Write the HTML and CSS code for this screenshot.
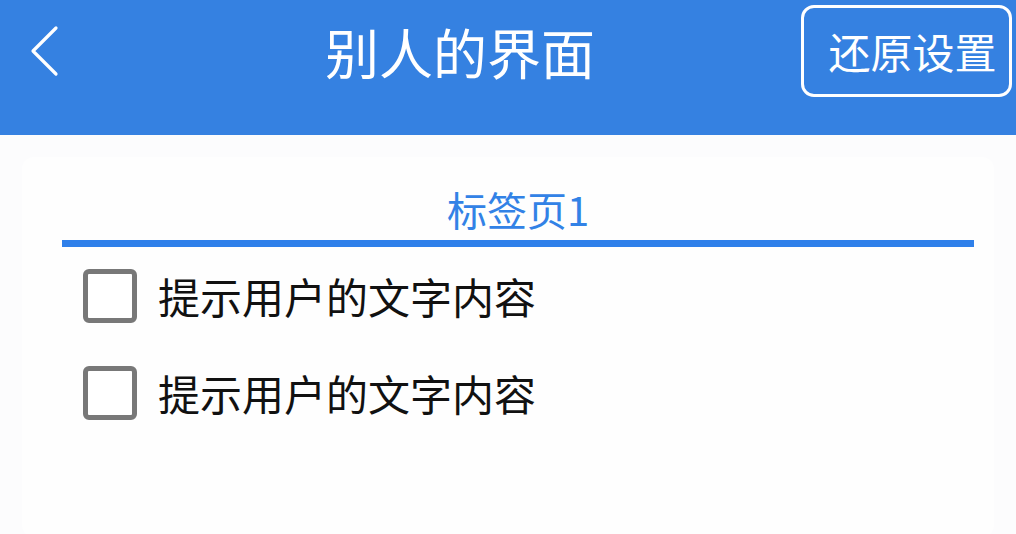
FILE: index.html
```html
<!DOCTYPE html>
<html lang="zh">
<head>
<meta charset="utf-8">
<title>别人的界面</title>
<link rel="stylesheet" href="styles.css">
</head>
<body>
<header class="topbar">
  <div class="back">
    <svg width="32" height="52" viewBox="0 0 32 52"><path d="M28 3 L5 26 L28 49" fill="none" stroke="#fff" stroke-width="3.2" stroke-linecap="round" stroke-linejoin="round"/></svg>
  </div>
  <h1 class="title">别人的界面</h1>
  <button class="reset">还原设置</button>
</header>
<main class="content">
  <section class="card">
    <div class="tabs">
      <div class="tab">标签页1</div>
    </div>
    <ul class="options">
      <li class="option"><span class="box"></span><span class="label">提示用户的文字内容</span></li>
      <li class="option"><span class="box"></span><span class="label">提示用户的文字内容</span></li>
    </ul>
  </section>
</main>
</body>
</html>
```
FILE: styles.css
```css
* { box-sizing: border-box; }
html, body { margin: 0; padding: 0; }
body {
  width: 1016px;
  height: 534px;
  overflow: hidden;
  background: #fcfcfd;
  font-family: "Noto Sans CJK SC", "Noto Sans", sans-serif;
}
.topbar {
  height: 135px;
  background: #3581e1;
  display: flex;
  align-items: flex-start;
  padding: 5px 4px 0 0;
}
.back {
  width: 119px;
  height: 92px;
  display: flex;
  align-items: center;
  padding-left: 28px;
}
.back svg { display: block; }
.title {
  flex: 1;
  margin: 0;
  height: 92px;
  display: flex;
  align-items: center;
  justify-content: center;
  color: #fff;
  font-size: 54px;
  font-weight: 400;
}
.reset {
  width: 211px;
  height: 92px;
  border: 3px solid #fff;
  border-radius: 13px;
  background: transparent;
  color: #fff;
  font-family: inherit;
  font-size: 42px;
  padding: 0 0 0 12px;
  line-height: 1;
}
.content {
  padding: 22px 22px 0 22px;
}
.card {
  background: #fefefe;
  border-radius: 12px;
  padding: 26px 20px 60px 40px;
  height: 380px;
}
.tabs {
  width: 912px;
  border-bottom: 7px solid #2f80ea;
}
.tab {
  text-align: center;
  color: #3282e6;
  font-size: 40px;
  line-height: 52px;
  padding-bottom: 5px;
}
.options {
  list-style: none;
  margin: 0;
  padding: 22px 0 0 21px;
}
.option {
  display: flex;
  align-items: center;
  height: 54px;
  margin-bottom: 43px;
}
.box {
  width: 54px;
  height: 54px;
  border: 5px solid #787878;
  border-radius: 6px;
  background: #fff;
  flex: none;
}
.label {
  margin-left: 21px;
  font-size: 42px;
  color: #111;
  line-height: 1;
}
```
